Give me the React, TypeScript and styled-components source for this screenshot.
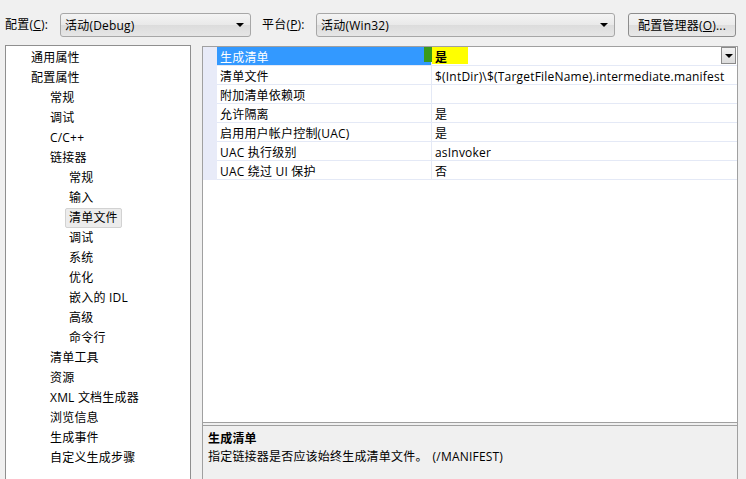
import { createGlobalStyle } from "styled-components";
import styled from "styled-components";

const GlobalStyle = createGlobalStyle`
  html, body {
    margin: 0;
    padding: 0;
    background: #f0f0f0;
  }
  body {
    font-family: "Open Sans", "Noto Sans CJK SC", sans-serif;
    font-size: 12px;
    letter-spacing: 0.2px;
    color: #000;
  }
`;

const Page = styled.div`
  width: 746px;
  height: 479px;
  overflow: hidden;
  display: flex;
  flex-direction: column;
  background: #f0f0f0;
`;

const Toolbar = styled.div`
  height: 45px;
  display: flex;
  align-items: flex-start;
  padding: 13px 0 0 5px;
  box-sizing: border-box;
`;

const Label = styled.span<{ width: number }>`
  width: ${({ width }) => width}px;
  line-height: 24px;
  white-space: nowrap;
`;

const Combo = styled.div<{ width: number }>`
  width: ${({ width }) => width}px;
  height: 24px;
  box-sizing: border-box;
  border: 1px solid #a7a7a7;
  border-radius: 3px;
  background: linear-gradient(#f4f4f4, #e9e9e9 50%, #dcdcdc 51%, #e6e6e6);
  display: flex;
  align-items: center;
  padding: 0 6px 0 4px;
  margin-right: 11px;
`;

const ComboText = styled.span`
  flex: 1;
`;

const Arrow = styled.span`
  width: 0;
  height: 0;
  border-left: 4px solid transparent;
  border-right: 4px solid transparent;
  border-top: 4px solid #000;
`;

const Button = styled.div`
  width: 108px;
  height: 24px;
  box-sizing: border-box;
  border: 1px solid #8d8d8d;
  border-radius: 3px;
  background: linear-gradient(#f4f4f4, #ececec 50%, #dedede 51%, #e8e8e8);
  display: flex;
  align-items: center;
  justify-content: center;
  margin-left: 2px;
`;

const Body = styled.div`
  flex: 1;
  display: flex;
  padding-left: 5px;
  gap: 11px;
  min-height: 0;
`;

const Tree = styled.div`
  width: 186px;
  height: 460px;
  box-sizing: border-box;
  background: #fff;
  border: 1px solid #8f8f8f;
  padding-top: 2px;
`;

const TreeItem = styled.div<{ level: number; selected?: boolean }>`
  height: 20px;
  display: flex;
  align-items: center;
  padding-left: ${({ level }) => 21 + level * 19}px;
  span {
    line-height: 18px;
    padding: 0 3px;
    border: 1px solid ${({ selected }) => (selected ? "#d2d2d2" : "transparent")};
    border-radius: 2px;
    background: ${({ selected }) => (selected ? "#ececec" : "transparent")};
    white-space: nowrap;
  }
`;

const Panel = styled.div`
  width: 536px;
  height: 460px;
  margin-top: 1px;
  box-sizing: border-box;
  border: 1px solid #a0a0a0;
  display: flex;
  flex-direction: column;
`;

const GridArea = styled.div`
  height: 375px;
  background: #fff;
  border-bottom: 1px solid #a0a0a0;
`;

const Row = styled.div`
  display: flex;
  height: 19px;
`;

const Gutter = styled.div`
  width: 14px;
  background: #e8ebf8;
`;

const NameCell = styled.div<{ selected?: boolean }>`
  width: 215px;
  box-sizing: border-box;
  padding: 3px 0 0 3px;
  line-height: 15px;
  border-bottom: 1px solid #e4e9f6;
  border-right: 1px solid #e4e9f6;
  background: ${({ selected }) => (selected ? "#3399ff" : "#fff")};
  color: ${({ selected }) => (selected ? "#fff" : "#000")};
  white-space: nowrap;
`;

const ValueCell = styled.div`
  flex: 1;
  box-sizing: border-box;
  padding: 3px 0 0 3px;
  line-height: 15px;
  border-bottom: 1px solid #e4e9f6;
  display: flex;
  align-items: flex-start;
  position: relative;
  white-space: nowrap;
`;

const Marker = styled.span`
  position: absolute;
  left: -8px;
  top: 0;
  width: 8px;
  height: 15px;
  background: #3a9a1a;
`;

const Highlight = styled.span`
  background: #ffff00;
  width: 36px;
  height: 17px;
  margin: -3px 0 0 -3px;
  padding: 3px 0 0 3px;
  font-weight: bold;
  box-sizing: border-box;
`;

const DropButton = styled.span`
  position: absolute;
  right: 1px;
  top: 0;
  width: 15px;
  height: 17px;
  box-sizing: border-box;
  border: 1px solid #8a8a8a;
  background: linear-gradient(#f2f2f2, #dcdcdc);
  display: flex;
  align-items: center;
  justify-content: center;
`;

const Desc = styled.div`
  flex: 1;
  margin-top: 2px;
  border-top: 1px solid #a0a0a0;
  background: #f0f0f0;
  padding: 4px 5px;
  line-height: 18px;
`;

const DescTitle = styled.div`
  font-weight: bold;
`;

const DescFlag = styled.span`
  margin-left: 5px;
`;

const tree: [string, number, boolean?][] = [
  ["通用属性", 0],
  ["配置属性", 0],
  ["常规", 1],
  ["调试", 1],
  ["C/C++", 1],
  ["链接器", 1],
  ["常规", 2],
  ["输入", 2],
  ["清单文件", 2, true],
  ["调试", 2],
  ["系统", 2],
  ["优化", 2],
  ["嵌入的 IDL", 2],
  ["高级", 2],
  ["命令行", 2],
  ["清单工具", 1],
  ["资源", 1],
  ["XML 文档生成器", 1],
  ["浏览信息", 1],
  ["生成事件", 1],
  ["自定义生成步骤", 1],
];

const props: [string, string][] = [
  ["清单文件", "$(IntDir)\\$(TargetFileName).intermediate.manifest"],
  ["附加清单依赖项", ""],
  ["允许隔离", "是"],
  ["启用用户帐户控制(UAC)", "是"],
  ["UAC 执行级别", "asInvoker"],
  ["UAC 绕过 UI 保护", "否"],
];

export default function App() {
  return (
    <Page>
      <GlobalStyle />
      <Toolbar>
        <Label width={55}>配置(<u>C</u>):</Label>
        <Combo width={191}>
          <ComboText>活动(Debug)</ComboText>
          <Arrow />
        </Combo>
        <Label width={54}>平台(<u>P</u>):</Label>
        <Combo width={299}>
          <ComboText>活动(Win32)</ComboText>
          <Arrow />
        </Combo>
        <Button>
          <span>配置管理器(<u>O</u>)...</span>
        </Button>
      </Toolbar>
      <Body>
        <Tree>
          {tree.map(([t, level, sel], i) => (
            <TreeItem key={i} level={level} selected={sel}>
              <span>{t}</span>
            </TreeItem>
          ))}
        </Tree>
        <Panel>
          <GridArea>
            <Row>
              <Gutter />
              <NameCell selected>生成清单</NameCell>
              <ValueCell>
                <Marker />
                <Highlight>是</Highlight>
                <DropButton>
                  <Arrow />
                </DropButton>
              </ValueCell>
            </Row>
            {props.map(([n, v]) => (
              <Row key={n}>
                <Gutter />
                <NameCell>{n}</NameCell>
                <ValueCell>{v}</ValueCell>
              </Row>
            ))}
          </GridArea>
          <Desc>
            <DescTitle>生成清单</DescTitle>
            <div>
              指定链接器是否应该始终生成清单文件。
              <DescFlag>(/MANIFEST)</DescFlag>
            </div>
          </Desc>
        </Panel>
      </Body>
    </Page>
  );
}
